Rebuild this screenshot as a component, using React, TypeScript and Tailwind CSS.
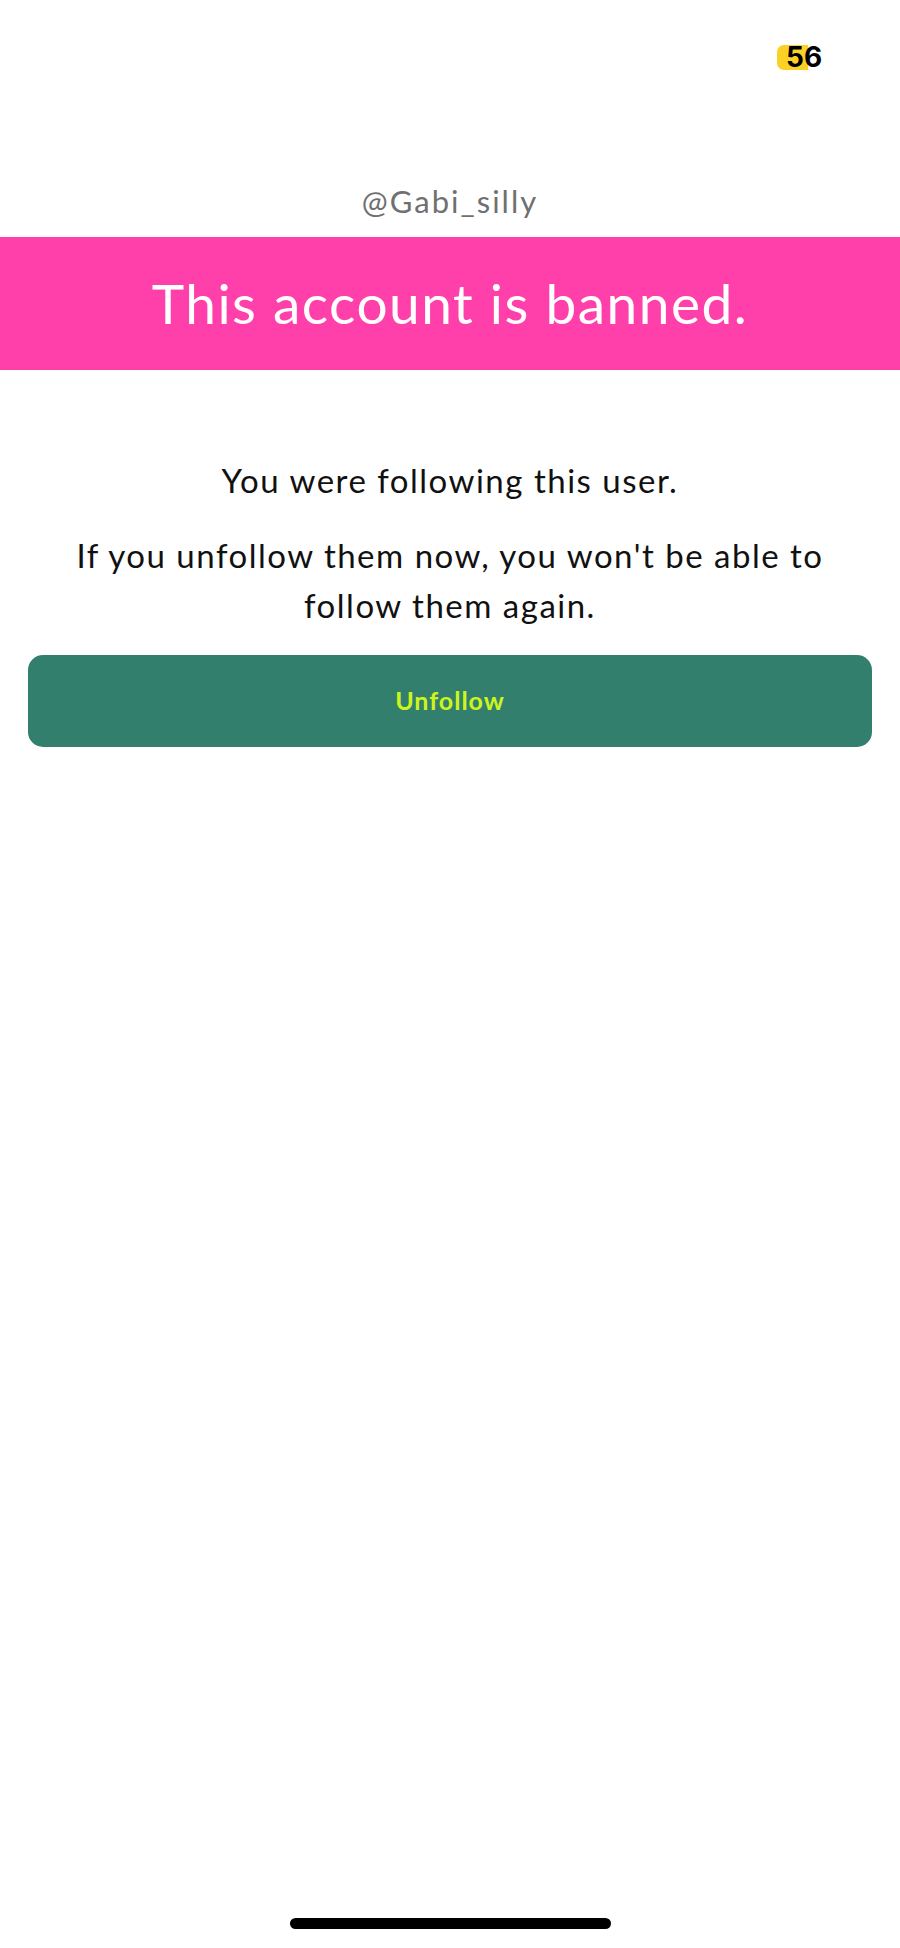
import React from 'react';

const App: React.FC = () => {
  return (
    <div className="relative flex h-[1948px] w-[900px] flex-col bg-white" style={{ fontFamily: 'Lato, "Noto Sans", sans-serif' }}>
      {/* status bar */}
      <div className="flex h-[183px] justify-end pr-[74px] pt-[45px]">
        <div className="relative h-[25px] w-[49px]">
          <span className="absolute left-0 top-0 h-[25px] w-[31px] rounded-l-[7px] bg-[#fbd126]"></span>
          <span
            className="absolute left-[9px] top-[-3px] text-[28px] font-bold leading-[31px] text-black"
            style={{ fontFamily: 'Inter, "Liberation Sans", sans-serif' }}
          >
            56
          </span>
        </div>
      </div>

      <p className="text-center text-[31px] leading-[36px] tracking-[2px] text-[#707070]">@Gabi_silly</p>

      <div className="mt-[18px] flex h-[133px] items-center justify-center bg-[#ff40ab]">
        <h1 className="text-[55px] font-normal leading-none tracking-[1.5px] text-white">This account is banned.</h1>
      </div>

      <div className="mt-[85px] px-[28px] text-center text-[33px] leading-[50px] tracking-[1.5px] text-[#111111]">
        <p>You were following this user.</p>
        <p className="mt-[25px]">
          If you unfollow them now, you won't be able to
          <br />
          follow them again.
        </p>
      </div>

      <div className="mt-[25px] px-[28px]">
        <button className="flex h-[92px] w-full items-center justify-center rounded-[15px] bg-[#337f6e] text-[25px] font-bold tracking-[1px] text-[#cdf51d]">
          Unfollow
        </button>
      </div>

      {/* home indicator */}
      <div className="mt-auto flex justify-center pb-[19px]">
        <div className="h-[11px] w-[321px] rounded-full bg-black"></div>
      </div>
    </div>
  );
};

export default App;
